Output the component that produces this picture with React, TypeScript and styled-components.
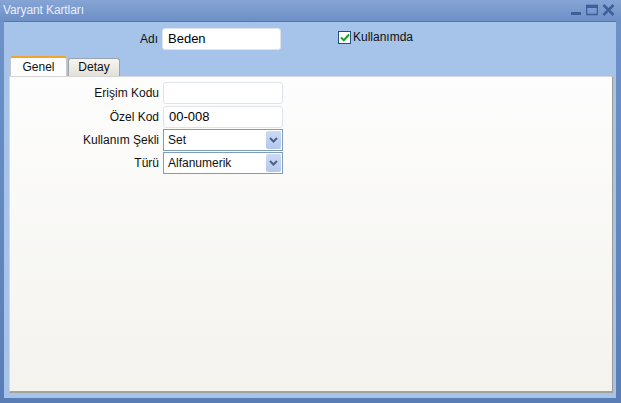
import React from 'react';
import styled, { createGlobalStyle } from 'styled-components';

const GlobalStyle = createGlobalStyle`
  html, body {
    margin: 0;
    padding: 0;
    overflow: hidden;
    background: #5b7fb6;
  }
  * {
    box-sizing: border-box;
  }
`;

const Window = styled.div`
  width: 621px;
  height: 403px;
  display: flex;
  flex-direction: column;
  background: linear-gradient(#6f92c9, #5b7db5);
  font-family: 'Liberation Sans', Arial, sans-serif;
  font-size: 12px;
  color: #111;
`;

const TitleBar = styled.div`
  height: 20px;
  display: flex;
  align-items: center;
  padding: 0 6px 0 3px;
  background: linear-gradient(#86a5d6, #6e90c6);
`;

const Title = styled.span`
  flex: 1;
  color: #e8eef8;
  font-size: 12px;
  letter-spacing: -0.1px;
`;

const Controls = styled.div`
  display: flex;
  align-items: center;
  gap: 4px;
`;

const Body = styled.div`
  flex: 1;
  margin: 1px 5px 5px 4px;
  background: #a6c4ea;
  border-top: 1px solid #5876ab;
  display: flex;
  flex-direction: column;
`;

const HeaderRow = styled.div`
  display: flex;
  align-items: flex-start;
  padding-top: 6px;
  height: 34px;
`;

const Label = styled.label<{ $width: number }>`
  width: ${(p) => p.$width}px;
  text-align: right;
  padding-right: 4px;
  line-height: 22px;
  white-space: nowrap;
`;

const TextBox = styled.div<{ $width: number }>`
  width: ${(p) => p.$width}px;
  height: 22px;
  background: #fff;
  border: 1px solid #dfe3ea;
  border-radius: 3px;
  padding: 0 5px;
  font-size: 13px;
  line-height: 20px;
  color: #000;
`;

const CheckWrap = styled.div`
  display: flex;
  align-items: center;
  gap: 2px;
  margin-left: 57px;
  margin-top: 2px;
`;

const CheckBox = styled.div`
  width: 13px;
  height: 13px;
  background: #fff;
  border: 1px solid #1c5180;
  display: flex;
  align-items: center;
  justify-content: center;
`;

const TabArea = styled.div`
  flex: 1;
  display: flex;
  flex-direction: column;
  margin: 0 0 0 5px;
`;

const TabStrip = styled.div`
  display: flex;
  align-items: flex-end;
  height: 20px;
  padding-left: 1px;
`;

const Tab = styled.div<{ $active?: boolean; $width: number }>`
  width: ${(p) => p.$width}px;
  height: ${(p) => (p.$active ? 20 : 18)}px;
  text-align: center;
  line-height: ${(p) => (p.$active ? 19 : 17)}px;
  border: 1px solid ${(p) => (p.$active ? '#c8c8c8' : '#9aa3ae')};
  border-top: ${(p) => (p.$active ? '2px solid #f2a52e' : '1px solid #9aa3ae')};
  border-bottom: none;
  border-radius: 3px 3px 0 0;
  background: ${(p) => (p.$active ? '#fdfdfd' : 'linear-gradient(#f6f5f1, #e2e0d8)')};
  margin-right: 1px;
`;

const Panel = styled.div`
  height: 317px;
  width: 604px;
  background: linear-gradient(#fdfdfd, #f4f3ee);
  border: 1px solid #d6d6d6;
  border-right: 1px solid #9a9a90;
  border-bottom: 2px solid #a3a39a;
  padding-top: 5px;
  display: flex;
  flex-direction: column;
`;

const FormRow = styled.div<{ $height: number }>`
  display: flex;
  align-items: flex-start;
  height: ${(p) => p.$height}px;
`;

const Select = styled.div`
  width: 120px;
  height: 22px;
  border: 1px solid #7f9db9;
  background: #fff;
  display: flex;
  align-items: center;
  padding: 0 1px 0 4px;
`;

const SelectValue = styled.span`
  flex: 1;
  font-size: 12px;
`;

const DropButton = styled.div`
  width: 15px;
  height: 18px;
  border-radius: 2px;
  background: linear-gradient(#cbdaf5, #b4c8ee);
  display: flex;
  align-items: center;
  justify-content: center;
`;

const Chevron = () => (
  <svg width="9" height="6" viewBox="0 0 9 6">
    <path d="M1 1 L4.5 4.5 L8 1" fill="none" stroke="#4d6185" strokeWidth="2" />
  </svg>
);

const Field: React.FC<{ label: string; value?: string; height: number }> = ({ label, value, height }) => (
  <FormRow $height={height}>
    <Label $width={153}>{label}</Label>
    <TextBox $width={120}>{value}</TextBox>
  </FormRow>
);

const Combo: React.FC<{ label: string; value: string; height: number }> = ({ label, value, height }) => (
  <FormRow $height={height}>
    <Label $width={153}>{label}</Label>
    <Select>
      <SelectValue>{value}</SelectValue>
      <DropButton>
        <Chevron />
      </DropButton>
    </Select>
  </FormRow>
);

export default function App() {
  return (
    <>
      <GlobalStyle />
      <Window>
        <TitleBar>
          <Title>Varyant Kartları</Title>
          <Controls>
            <svg width="12" height="12" viewBox="0 0 12 12">
              <rect x="1" y="8" width="10" height="3" fill="#3e5f99" />
            </svg>
            <svg width="12" height="12" viewBox="0 0 12 12">
              <rect x="0.5" y="1.5" width="11" height="9" fill="none" stroke="#3e5f99" strokeWidth="1.6" />
              <rect x="0" y="1" width="12" height="3" fill="#3e5f99" />
            </svg>
            <svg width="13" height="12" viewBox="0 0 13 12">
              <path d="M1.5 1 L11.5 11 M11.5 1 L1.5 11" stroke="#3e5f99" strokeWidth="2.6" />
            </svg>
          </Controls>
        </TitleBar>
        <Body>
          <HeaderRow>
            <Label $width={158}>Adı</Label>
            <TextBox $width={119}>Beden</TextBox>
            <CheckWrap>
              <CheckBox>
                <svg width="10" height="9" viewBox="0 0 10 9">
                  <path d="M1 4.5 L3.8 7.2 L9 1.5" fill="none" stroke="#21a121" strokeWidth="2" />
                </svg>
              </CheckBox>
              <span>Kullanımda</span>
            </CheckWrap>
          </HeaderRow>
          <TabArea>
            <TabStrip>
              <Tab $active $width={57}>Genel</Tab>
              <Tab $width={52}>Detay</Tab>
            </TabStrip>
            <Panel>
              <Field label="Erişim Kodu" height={24} />
              <Field label="Özel Kod" value="00-008" height={23} />
              <Combo label="Kullanım Şekli" value="Set" height={23} />
              <Combo label="Türü" value="Alfanumerik" height={23} />
            </Panel>
          </TabArea>
        </Body>
      </Window>
    </>
  );
}
